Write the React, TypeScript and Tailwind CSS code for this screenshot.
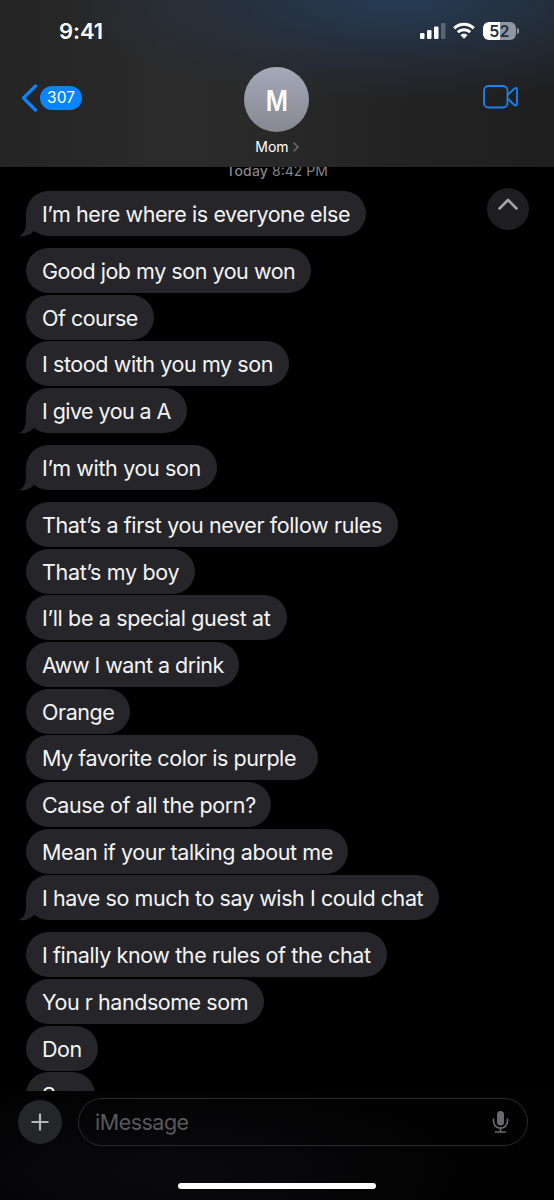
import clsx from "clsx";

type Message = { text: string; width: string; tracking: string };

const groups: Message[][] = [
  [{ text: "I’m here where is everyone else", width: "w-[340px]", tracking: "tracking-[-0.43px]" }],
  [
    { text: "Good job my son you won", width: "w-[285px]", tracking: "tracking-[-0.47px]" },
    { text: "Of course", width: "w-[127.500px]", tracking: "tracking-[-0.5px]" },
    { text: "I stood with you my son", width: "w-[263px]", tracking: "tracking-[-0.41px]" },
    { text: "I give you a A", width: "w-[161px]", tracking: "tracking-[-0.56px]" },
  ],
  [{ text: "I’m with you son", width: "w-[190.500px]", tracking: "tracking-[-0.36px]" }],
  [
    { text: "That’s a first you never follow rules", width: "w-[372px]", tracking: "tracking-[-0.38px]" },
    { text: "That’s my boy", width: "w-[169px]", tracking: "tracking-[-0.33px]" },
    { text: "I’ll be a special guest at", width: "w-[261px]", tracking: "tracking-[-0.35px]" },
    { text: "Aww I want a drink", width: "w-[213px]", tracking: "tracking-[-0.53px]" },
    { text: "Orange", width: "w-[104px]", tracking: "tracking-[-0.45px]" },
    { text: "My favorite color is purple", width: "w-[292px]", tracking: "tracking-[-0.44px]" },
    { text: "Cause of all the porn?", width: "w-[245px]", tracking: "tracking-[-0.39px]" },
    { text: "Mean if your talking about me", width: "w-[322px]", tracking: "tracking-[-0.39px]" },
    { text: "I have so much to say wish I could chat", width: "w-[412.500px]", tracking: "tracking-[-0.42px]" },
  ],
  [
    { text: "I finally know the rules of the chat", width: "w-[360.500px]", tracking: "tracking-[-0.39px]" },
    { text: "You r handsome som", width: "w-[237.500px]", tracking: "tracking-[-0.45px]" },
    { text: "Don", width: "w-[71.500px]", tracking: "tracking-[-0.5px]" },
    { text: "Son", width: "w-[69px]", tracking: "tracking-[-0.5px]" },
  ],
];

const Tail = () => (
  <svg
    className="absolute bottom-[-1px] left-[-7px]"
    width="22"
    height="24"
    viewBox="0 0 22 24"
    fill="#26262a"
  >
    <path d="M7 0V9C7 16 5 21 0 23C6 24 11 22 15 18L22 12V0Z" />
  </svg>
);

const StatusIcons = () => (
  <div className="flex items-center">
    <svg width="26" height="18" viewBox="0 0 26 18" fill="#fff">
      <rect x="0" y="11" width="4.500" height="6" rx="1.200" />
      <rect x="7" y="8" width="4.500" height="9" rx="1.200" />
      <rect x="14" y="4.500" width="4.500" height="12.500" rx="1.200" />
      <rect x="21" y="1" width="4.500" height="16" rx="1.200" opacity="0.250" />
    </svg>
    <svg
      className="ml-[7px]"
      width="22"
      height="18"
      viewBox="0 0 22 18"
      fill="none"
      stroke="#fff"
      strokeWidth="3"
    >
      <path d="M1.200 6.300C6.800 0.900 15.200 0.900 20.800 6.300" />
      <path d="M4.800 10.200C8.400 6.900 13.600 6.900 17.200 10.200" />
      <path d="M7.500 13.200C9.500 11.300 12.500 11.300 14.500 13.200L11 16.800Z" fill="#fff" stroke="none" />
    </svg>
    <div className="relative ml-[8px] flex h-[18px] w-[33px] items-center justify-center rounded-[6px] bg-linear-to-r from-white from-52% to-[#8f969e] to-52%">
      <span className="text-[16px] leading-none font-semibold tracking-[0.3px] text-[#22303f]">
        52
      </span>
      <span className="absolute top-[6px] -right-[3px] h-[6px] w-[2px] rounded-r-full bg-[#8f969e]" />
    </div>
  </div>
);

const Header = () => (
  <header className="relative h-[167px] shrink-0 bg-[radial-gradient(ellipse_330px_100px_at_400px_0px,#263c56_0%,#253344b0_50%,transparent_100%),linear-gradient(90deg,#242424_0%,#2b2b2c_30%,#292929_48%,#222222_75%,#1f1f1f_100%)]">
    <div className="flex h-[62px] items-center justify-between pr-[38px] pl-[59px]">
      <span className="text-[22px] font-semibold tracking-[-0.1px] text-white">9:41</span>
      <StatusIcons />
    </div>
    <div className="grid grid-cols-3 px-[21px]">
      <div className="flex h-[71px] items-center">
        <svg width="17" height="28" viewBox="0 0 17 28" fill="none">
          <path
            d="M14.500 2L2.500 14L14.500 26"
            stroke="#0a84ff"
            strokeWidth="3.200"
            strokeLinecap="round"
            strokeLinejoin="round"
          />
        </svg>
        <span className="ml-[2px] flex h-[24px] w-[42px] items-center justify-center rounded-full bg-[#0a84ff] text-[15.5px] text-white">
          307
        </span>
      </div>
      <div className="flex flex-col items-center pt-[5px]">
        <div className="flex size-[65px] items-center justify-center rounded-full bg-linear-to-b from-[#a5a9b8] to-[#868892] pt-[2px] text-[28px] font-semibold text-white">
          <span className="scale-x-[0.86]">M</span>
        </div>
        <div className="mt-[6px] flex items-center gap-[4px] text-[14px] leading-[18px] text-white">
          Mom
          <svg width="6" height="10" viewBox="0 0 6 10" fill="none">
            <path d="M1 1L5 5L1 9" stroke="#78787c" strokeWidth="1.200" strokeLinecap="round" />
          </svg>
        </div>
      </div>
      <div className="flex h-[70px] items-center justify-end pr-[15px]">
        <svg
          width="35"
          height="24"
          viewBox="0 0 35 24"
          fill="none"
          stroke="#1a84f0"
          strokeWidth="1.800"
          strokeLinejoin="round"
        >
          <rect x="1" y="1" width="23.500" height="21.500" rx="4.500" />
          <path d="M24.500 10L31.500 3.500Q34 2 34 4.500V19Q34 21.500 31.500 20L24.500 13.500" />
        </svg>
      </div>
    </div>
  </header>
);

const Bubble = ({ message, last }: { message: Message; last: boolean }) => (
  <div
    className={clsx(
      "relative h-[45px] rounded-full bg-[#26262a] pl-[16px] text-[21.5px] leading-[46px] whitespace-nowrap text-[#f4f4f5]",
      message.width,
      message.tracking,
    )}
  >
    {last && <Tail />}
    <span className="relative">{message.text}</span>
  </div>
);

const Composer = () => (
  <footer className="h-[109px] shrink-0 bg-[radial-gradient(ellipse_300px_90px_at_170px_80px,#0a0a0c,#020203)] pt-[7px]">
    <div className="flex items-center pr-[26px] pl-[18px]">
      <button className="flex size-[44px] items-center justify-center rounded-full bg-[#252627]">
        <svg width="18" height="18" viewBox="0 0 18 18" stroke="#b4b5b7" strokeWidth="2.200">
          <path d="M9 0.500V17.500M0.500 9H17.500" />
        </svg>
      </button>
      <div className="ml-[16px] flex h-[48px] flex-1 items-center justify-between rounded-full border border-[#2a2a2c] pr-[18px] pl-[16px]">
        <span className="text-[21.5px] tracking-[-0.5px] text-[#59595b]">iMessage</span>
        <svg width="17" height="24" viewBox="0 0 17 24" fill="none" stroke="#6a6a6c">
          <rect x="5" y="1" width="7" height="14.500" rx="3.500" fill="#6a6a6c" stroke="none" />
          <path
            d="M1.500 9V11C1.500 20.500 15.500 20.500 15.500 11V9M8.500 18V22M3.500 22H13.500"
            strokeWidth="1.700"
            strokeLinecap="round"
          />
        </svg>
      </div>
    </div>
    <div className="mx-auto mt-[37px] h-[6px] w-[198px] rounded-full bg-white" />
  </footer>
);

export default function App() {
  return (
    <div className="flex h-[1200px] w-full flex-col overflow-hidden bg-black font-['Inter',sans-serif]">
      <Header />
      <main className="relative min-h-0 flex-1 overflow-hidden">
        <p className="-mt-[5px] mb-[11px] text-center text-[14px] leading-[18px] text-[#858589]">
          <span className="font-medium tracking-[0.2px]">Today</span> 8:42 PM
        </p>
        <div className="flex flex-col gap-[12px] pl-[26px]">
          {groups.map((group, g) => (
            <div key={g} className="flex flex-col gap-[1.67px]">
              {group.map((message, i) => (
                <Bubble
                  key={message.text}
                  message={message}
                  last={i === group.length - 1 && g < groups.length - 1}
                />
              ))}
            </div>
          ))}
        </div>
        <button className="absolute top-[21px] right-[25px] flex size-[42px] items-center justify-center rounded-full bg-[#1e1e20] pb-[11px]">
          <svg width="20" height="12" viewBox="0 0 20 12" fill="none">
            <path
              d="M1.500 10.500L10 2L18.500 10.500"
              stroke="#a4a4a6"
              strokeWidth="2.600"
              strokeLinecap="round"
              strokeLinejoin="round"
            />
          </svg>
        </button>
      </main>
      <Composer />
    </div>
  );
}
